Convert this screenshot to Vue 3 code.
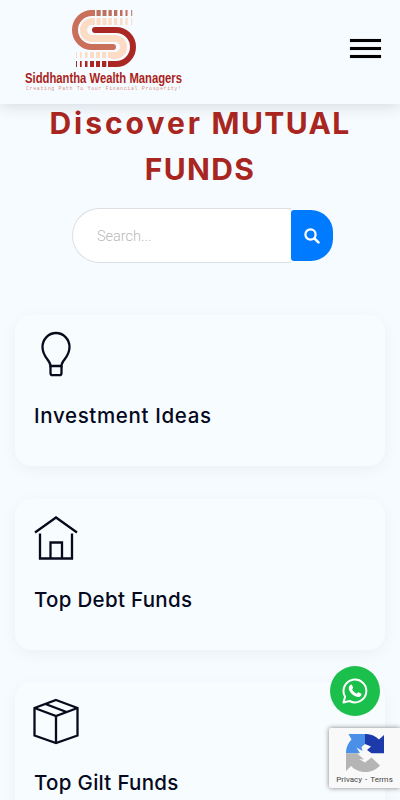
<template>
  <div class="page">
    <header class="header">
      <svg class="logo" width="162" height="90" viewBox="0 0 162 90">
        <g fill="none" stroke-width="6">
          <path d="M72 16.5H69A8.5 8.5 0 0 0 69 33.5H92A8.5 8.5 0 0 1 92 50.5H88" stroke="#fddcc5" stroke-width="7" />
          <path d="M72 8H69A17 17 0 0 0 69 42H90" stroke="#c96f5a" />
          <path d="M72 25H93A17 17 0 0 1 93 59H89" stroke="#ab2724" />
        </g>
        <circle cx="90" cy="42" r="3" fill="#c96f5a" />
        <circle cx="72" cy="25" r="3" fill="#ab2724" />
        <g v-for="(bar, i) in topBars" :key="'t' + i">
          <rect :x="bar[0]" y="5" :width="bar[1]" height="6" fill="#bd705e" />
          <rect :x="bar[0]" y="13" :width="bar[1]" height="7" fill="#fddcc5" />
        </g>
        <g v-for="(bar, i) in bottomBars" :key="'b' + i">
          <rect :x="bar[0]" y="47" :width="bar[1]" height="6" fill="#fddcc5" />
          <rect :x="bar[0]" y="56" :width="bar[1]" height="6" fill="#ab2724" />
        </g>
        <text class="logo-name" x="2" y="77.7" textLength="157" lengthAdjust="spacingAndGlyphs">Siddhantha Wealth Managers</text>
        <text class="logo-tagline" x="3" y="84.5" textLength="155">Creating Path To Your Financial Prosperity!</text>
      </svg>
      <button class="menu-button" aria-label="Menu">
        <span></span>
        <span></span>
        <span></span>
      </button>
    </header>

    <main>
      <h1 class="title">
        <span class="title-word">Discover</span> <span>MUTUAL</span><br />
        <span>FUNDS</span>
      </h1>

      <form class="search" @submit.prevent>
        <input v-model="query" type="text" placeholder="Search..." />
        <button class="search-button" aria-label="Search">
          <svg width="16" height="16" viewBox="0 0 16 16" fill="none" stroke="#fff">
            <circle cx="6.5" cy="6.5" r="5.1" stroke-width="2.2" />
            <path d="M10.4 10.4L14.4 14.4" stroke-width="2.7" stroke-linecap="round" />
          </svg>
        </button>
      </form>

      <div class="cards">
        <section v-for="card in cards" :key="card.title" class="card">
          <svg class="card-icon" width="46" height="48" viewBox="0 0 46 48">
            <path v-for="d in card.paths" :key="d" :d="d" />
          </svg>
          <h4 :class="['card-title', card.icon]">{{ card.title }}</h4>
        </section>
      </div>
    </main>

    <a class="whatsapp" href="#" aria-label="WhatsApp">
      <svg width="26" height="26" viewBox="0 0 26 26">
        <path d="M1.5 24.5L3.1 18.7A11.4 11.4 0 1 1 7.6 23Z" fill="none" stroke="#fff" stroke-width="2" stroke-linejoin="round" />
        <path d="M8.6 6.7C9.2 6.4 9.8 6.5 10.1 7.2L11.1 9.5C11.3 10 10.4 10.9 10.1 11.3C11 13.3 12.5 14.8 14.8 15.7C15.3 15.2 16 14.1 16.5 14.3L19 15.5C19.7 15.8 19.4 17 19 17.7C17.8 19.2 15.7 19.3 14 18.6C10.8 17.3 8.5 15 7.2 12.3C6.2 10.2 6.8 7.8 8.6 6.7Z" fill="#fff" />
      </svg>
    </a>

    <div class="captcha">
      <svg width="38" height="38" viewBox="0 0 38 38">
        <path d="M0 19.2A19 19 0 0 1 5.5 5.5L2.5 0H19V10L15.5 13L16.5 17L10.5 13.5L14 19.2Z" fill="#4a90e8" />
        <path d="M19 0A19 19 0 0 1 33 5.5L38 1V19.2H25.5L21 16L25 12.5L19 10Z" fill="#1c3aa9" />
        <path d="M0 19.2H11L18 25.5L13 25L19 28.5L25.5 23.5L34 31.5C26.5 40.5 12 40 5 32L0 37Z" fill="#b5b5b5" />
      </svg>
      <div class="captcha-links"><span>Privacy</span><span>-</span><span>Terms</span></div>
    </div>
  </div>
</template>

<script setup>
import { ref } from 'vue';

const query = ref('');

// [x, width] of the stripes that trail off the logo
const topBars = [[73.5, 4.2], [79.5, 4], [85.5, 3.3], [91, 3.3], [97, 2.5], [102.5, 2], [108.2, 1]];
const bottomBars = [[53, 1], [57, 1.7], [62, 2.5], [67, 4], [73, 4], [79, 4.3], [85, 5]];

const cards = [
  {
    title: 'Investment Ideas',
    icon: 'bulb',
    paths: [
      'M17.5 36C17.5 30 9.5 27.5 9.5 17A13.5 14 0 0 1 36.5 17C36.5 27.5 28.5 30 28.5 36Z',
      'M17.5 36V43Q17.5 45.2 19.5 45.2H26.5Q28.5 45.2 28.5 43V36',
    ],
  },
  {
    title: 'Top Debt Funds',
    icon: 'home',
    paths: ['M2 18.5L23 3.5L44 18.5', 'M7 19.5V44.5H39V19.5', 'M17.5 44.5V28.5H29V44.5'],
  },
  {
    title: 'Top Gilt Funds',
    icon: 'box',
    paths: ['M23 3L44.5 11V38.5L23 46L1.5 38.5V11Z', 'M1.5 11L23 19L44.5 11', 'M23 19V46', 'M12.5 7L33.5 15'],
  },
];
</script>

<style>
body {
  background: #f6fbff;
}
</style>

<style scoped>
.page {
  position: relative;
  height: 800px;
  overflow: hidden;
  background: #f6fbff;
  font-family: Inter, "Open Sans", sans-serif;
}

.header {
  box-sizing: border-box;
  height: 104px;
  padding: 5px 19px 0 23px;
  display: flex;
  justify-content: space-between;
  box-shadow: 0 1px 16px rgba(0, 0, 0, 0.15);
}

.logo {
  display: block;
  overflow: visible;
}

.logo-name {
  font: bold 15.5px "Liberation Sans Narrow", "Liberation Sans", sans-serif;
  fill: #a91f20;
}

.logo-tagline {
  font: 5px "Liberation Mono", monospace;
  fill: #d69388;
}

.menu-button {
  display: flex;
  flex-direction: column;
  gap: 5px;
  margin-top: 34px;
  padding: 0;
  border: 0;
  background: none;
  height: 21px;
}

.menu-button span {
  width: 31px;
  height: 3px;
  background: #000;
  box-shadow: 0 0 1px rgba(0, 0, 0, 0.5);
}

.title {
  margin: -4px 0 0;
  color: #a92520;
  font-size: 30px;
  font-weight: 700;
  line-height: 46px;
  letter-spacing: 1.4px;
  text-align: center;
}

.title-word {
  letter-spacing: 3px;
}

.search {
  display: flex;
  align-items: center;
  width: 261px;
  margin: 16px auto 0 72px;
}

.search input {
  box-sizing: border-box;
  width: 219px;
  height: 55px;
  padding: 1px 24px 0;
  border: 1px solid #dcdfe3;
  border-right: 0;
  border-radius: 28px 0 0 28px;
  background: #fff;
  font: 300 14.5px Roboto, sans-serif;
  outline: none;
}

.search input::placeholder {
  color: #b9b9b9;
}

.search-button {
  display: flex;
  align-items: center;
  justify-content: center;
  width: 41.5px;
  height: 51px;
  padding: 0;
  border: 0;
  border-radius: 3px 22px 22px 3px;
  background: #007bff;
}

.cards {
  display: grid;
  gap: 32.5px;
  margin: 52px 15px 0;
}

.card {
  box-sizing: border-box;
  height: 151px;
  padding: 15px 18px;
  border-radius: 16px;
  background: #f7fcff;
  box-shadow: 0 4px 16px rgba(0, 0, 0, 0.045);
}

.card-icon {
  display: block;
  fill: none;
  stroke: #060b1c;
  stroke-width: 2.3;
}

.card-title {
  margin: 24px 0 0 1px;
  color: #04091e;
  font-size: 20.5px;
  font-weight: 450;
  line-height: 28px;
  letter-spacing: 0.3px;
  white-space: nowrap;
}

.card-title.bulb {
  letter-spacing: 0.65px;
}

.whatsapp {
  position: absolute;
  top: 666px;
  right: 20.5px;
  display: flex;
  align-items: center;
  justify-content: center;
  width: 50px;
  height: 50px;
  border-radius: 50%;
  background: #1bbf4b;
}

.captcha {
  position: absolute;
  top: 728px;
  right: 0;
  display: flex;
  flex-direction: column;
  align-items: center;
  box-sizing: border-box;
  width: 71px;
  height: 60px;
  padding-top: 6px;
  border-radius: 2px 0 0 2px;
  background: #f9f9f9;
  box-shadow: 0 0 5px #808080;
}

.captcha-links {
  display: flex;
  gap: 3px;
  margin-top: 3px;
  color: #444;
  font: 8px/10px Roboto, sans-serif;
}
</style>
